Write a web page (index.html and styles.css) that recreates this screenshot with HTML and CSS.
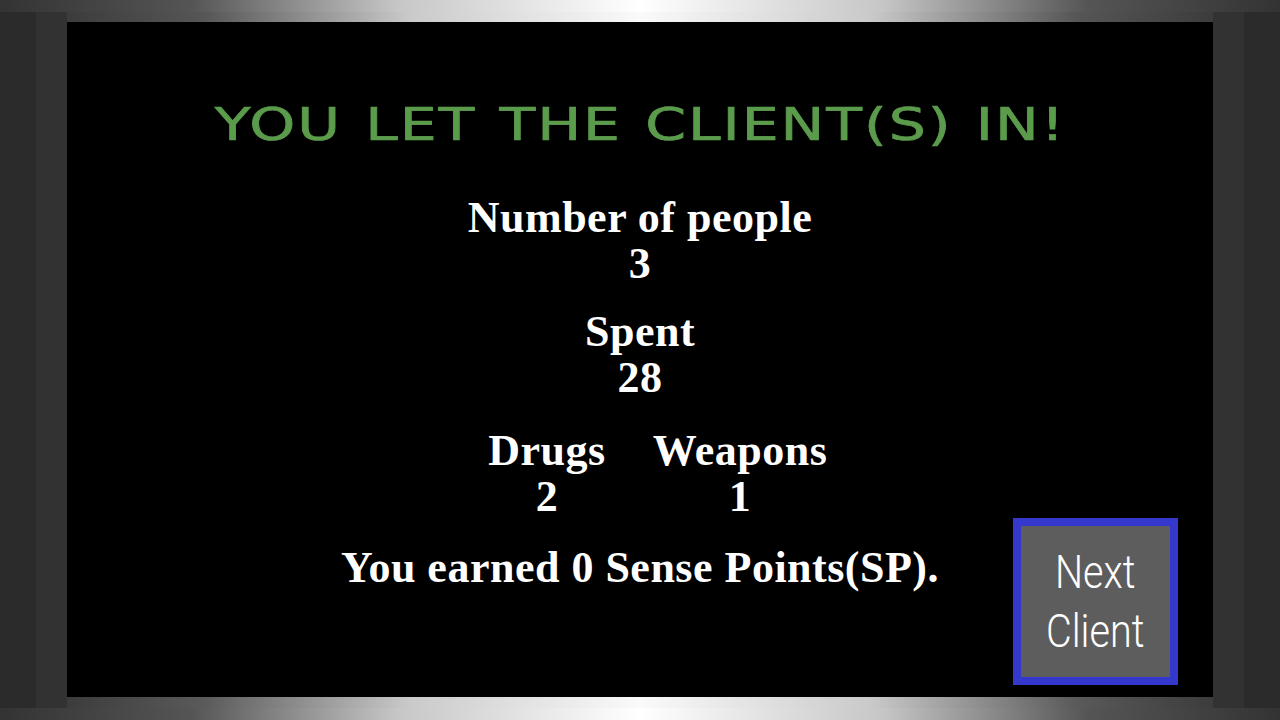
FILE: index.html
```html
<!DOCTYPE html>
<html lang="en">
<head>
  <meta charset="UTF-8">
  <meta name="viewport" content="width=device-width, initial-scale=1.0">
  <title>Client Report</title>
  <link rel="stylesheet" href="styles.css">
</head>
<body>
  <div class="frame">
    <div class="bezel">
      <div class="screen">

        <!-- Round summary -->
        <div class="summary">
          <h1 class="title"><span>YOU LET THE CLIENT(S) IN!</span></h1>

          <div class="stat stat-first">
            <div class="label">Number of people</div>
            <div class="value">3</div>
          </div>

          <div class="stat stat-spent">
            <div class="label">Spent</div>
            <div class="value">28</div>
          </div>

          <div class="stat-row">
            <div class="stat">
              <div class="label">Drugs</div>
              <div class="value">2</div>
            </div>
            <div class="stat">
              <div class="label">Weapons</div>
              <div class="value">1</div>
            </div>
          </div>

          <p class="earned">You earned <span id="sense-points">0</span> Sense Points(SP).</p>
        </div>

        <!-- Continue -->
        <button class="next-btn" type="button"><span>Next<br>Client</span></button>
      </div>
    </div>
  </div>
</body>
</html>
```

FILE: styles.css
```css
body {
  margin: 0;
  background: #2b2b2b;
  overflow: hidden;
}

/* metal frame round the screen */
.frame {
  width: 1280px;
  height: 720px;
  box-sizing: border-box;
  padding: 12px 36px;
  background:
    linear-gradient(90deg, #333 0%, #555 15%, #c6c6c6 31%, #fff 50%, #c6c6c6 69%, #555 85%, #333 100%) top / 100% 12px no-repeat,
    linear-gradient(90deg, #333 0%, #555 15%, #c6c6c6 31%, #fff 50%, #c6c6c6 69%, #555 85%, #333 100%) bottom / 100% 12px no-repeat,
    #2b2b2b;
}

.bezel {
  height: 100%;
  box-sizing: border-box;
  padding: 10px 31px 11px 31px;
  background:
    linear-gradient(90deg, #3c3c3c 0%, #565656 12%, #cacaca 30%, #fafafa 50%, #cacaca 70%, #565656 88%, #3c3c3c 100%) 31px 0 / calc(100% - 62px) 10px no-repeat,
    linear-gradient(90deg, #3c3c3c 0%, #5a5a5a 12%, #cacaca 30%, #fafafa 50%, #cacaca 70%, #5a5a5a 88%, #3c3c3c 100%) 31px 100% / calc(100% - 62px) 11px no-repeat,
    #323232;
}

.screen {
  height: 100%;
  background: #000;
  display: grid;
}

.summary {
  grid-area: 1 / 1;
  display: flex;
  flex-direction: column;
  align-items: center;
  padding-top: 80px;
  font-family: "Liberation Serif", "Times New Roman", serif;
  font-weight: bold;
  font-size: 44px;
  line-height: 46px;
  letter-spacing: 0.5px;
  color: #fff;
}

.title {
  margin: 0 0 48px;
  font-family: "DejaVu Sans", sans-serif;
  font-weight: normal;
  font-size: 45px;
  line-height: 45px;
  color: #5b9b4c;
  letter-spacing: 1.5px;
  word-spacing: 2px;
  white-space: nowrap;
}

.title span {
  display: inline-block;
  transform: scaleX(1.3);
  -webkit-text-stroke: 0.7px #5b9b4c;
}

.stat {
  text-align: center;
}

.stat-spent {
  margin-top: 22px;
}

.stat-row {
  display: grid;
  grid-template-columns: 193px 193px;
  margin: 27px 0 0 7px;
}

.earned {
  margin: 25px 0 0;
}

.next-btn {
  grid-area: 1 / 1;
  justify-self: end;
  align-self: end;
  margin: 0 35px 12px 0;
  width: 165px;
  height: 167px;
  padding: 0;
  border: 8px solid #3538cc;
  background: #5d5d5d;
  color: #fff;
  font-family: Roboto, "Liberation Sans", sans-serif;
  font-weight: 300;
  font-size: 46px;
  line-height: 59px;
  cursor: pointer;
}

.next-btn span {
  display: inline-block;
  transform: scaleX(0.86);
}
```
